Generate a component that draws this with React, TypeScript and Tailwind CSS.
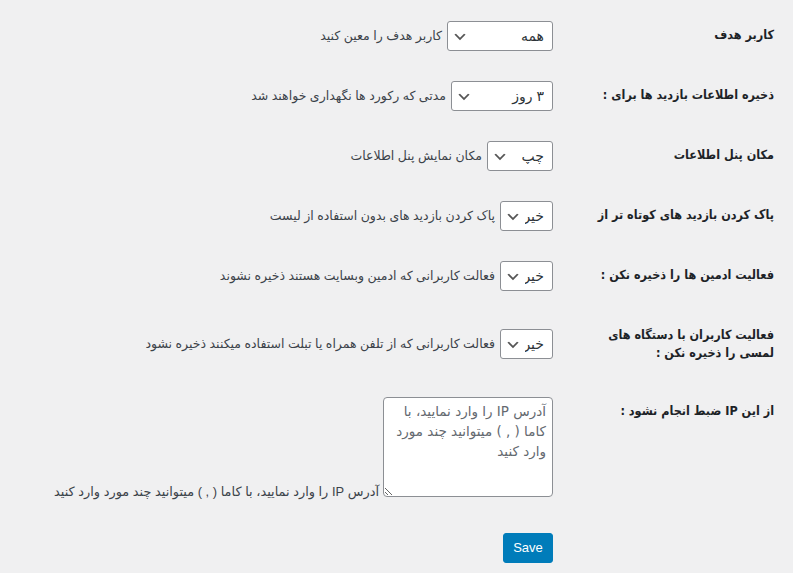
import React from "react";

const Chevron = () => (
  <svg
    className="pointer-events-none absolute left-[5px] top-[8px]"
    width="16"
    height="16"
    viewBox="0 0 20 20"
  >
    <path d="M5 6l5 5 5-5 2 1-7 7-7-7 2-1z" fill="#555" />
  </svg>
);

const Select = ({ value, w }: { value: string; w: string }) => (
  <div className={`relative h-[30px] shrink-0 ${w}`}>
    <select
      defaultValue={value}
      className="h-[30px] w-full appearance-none rounded-[3px] border border-[#8c8f94] bg-white pr-[8px] pl-[24px] text-[14px] text-[#2c3338] outline-none"
    >
      <option value={value}>{value}</option>
    </select>
    <Chevron />
  </div>
);

const labelCls =
  "whitespace-nowrap pt-[20px] pb-[20px] pl-[10px] text-[12.5px] font-bold text-[#1d2327] font-[family-name:'DejaVu_Sans_Condensed','DejaVu_Sans',sans-serif]";

const Line = ({ children }: { children: React.ReactNode }) => (
  <div className="h-[18px] overflow-visible leading-[18px]">{children}</div>
);

const Row = ({
  label,
  children,
}: {
  label: React.ReactNode;
  children: React.ReactNode;
}) => (
  <div className="grid grid-cols-[211px_1fr]">
    <div className={labelCls}>{label}</div>
    <div className="flex h-[60px] items-center self-center pr-[10px]">{children}</div>
  </div>
);

const Desc = ({ children }: { children: React.ReactNode }) => (
  <span className="mr-[5px] whitespace-nowrap text-[12.5px] leading-[18px] text-[#3c434a]">
    {children}
  </span>
);

export default function App() {
  return (
    <div
      dir="rtl"
      className="min-h-[573px] w-[793px] bg-[#f0f0f1] pt-[6px] pr-[19px] font-[family-name:'Liberation_Sans','DejaVu_Sans',sans-serif]"
    >
      <Row label={<Line>کاربر هدف</Line>}>
        <Select value="همه" w="w-[106px]" />
        <Desc>کاربر هدف را معین کنید</Desc>
      </Row>
      <Row label={<Line>ذخیره اطلاعات بازدید ها برای :</Line>}>
        <Select value="۳ روز" w="w-[102px]" />
        <Desc>مدتی که رکورد ها نگهداری خواهند شد</Desc>
      </Row>
      <Row label={<Line>مکان پنل اطلاعات</Line>}>
        <Select value="چپ" w="w-[66px]" />
        <Desc>مکان نمایش پنل اطلاعات</Desc>
      </Row>
      <Row label={<Line>پاک کردن بازدید های کوتاه تر از</Line>}>
        <Select value="خیر" w="w-[53px]" />
        <Desc>پاک کردن بازدید های بدون استفاده از لیست</Desc>
      </Row>
      <Row label={<Line>فعالیت ادمین ها را ذخیره نکن :</Line>}>
        <Select value="خیر" w="w-[53px]" />
        <Desc>فعالت کاربرانی که ادمین وبسایت هستند ذخیره نشوند</Desc>
      </Row>
      <Row
        label={
          <>
            <Line>فعالیت کاربران با دستگاه های</Line>
            <Line>لمسی را ذخیره نکن :</Line>
          </>
        }
      >
        <Select value="خیر" w="w-[53px]" />
        <Desc>فعالت کاربرانی که از تلفن همراه یا تبلت استفاده میکنند ذخیره نشود</Desc>
      </Row>
      <div className="grid grid-cols-[211px_1fr]">
        <div className={labelCls}>
          <Line>از این IP ضبط انجام نشود :</Line>
        </div>
        <div className="flex h-[130px] items-end py-[15px] pr-[10px]">
          <textarea
            className="h-[100px] w-[170px] shrink-0 resize rounded-[4px] border border-[#8c8f94] bg-white px-[6px] pt-[3px] pb-[2px] font-[family-name:'DejaVu_Sans',sans-serif] text-[13.5px] leading-[20px] text-[#2c3338] outline-none placeholder:text-[#646970]"
            placeholder={"آدرس IP را وارد نمایید، با\nکاما ( , ) میتوانید چند مورد\nوارد کنید"}
          />
          <span className="-mb-[4px] mr-[4px] whitespace-nowrap text-[12.9px] leading-[18px] text-[#3c434a]">
            آدرس IP را وارد نمایید، با کاما ( , ) میتوانید چند مورد وارد کنید
          </span>
        </div>
      </div>
      <div className="grid grid-cols-[211px_1fr]">
        <div />
        <div className="flex pt-[21px] pr-[10px]">
          <button className="h-[30px] w-[50px] rounded-[3px] border border-[#007cba] bg-[#007cba] text-[13px] text-white">
            Save
          </button>
        </div>
      </div>
    </div>
  );
}
